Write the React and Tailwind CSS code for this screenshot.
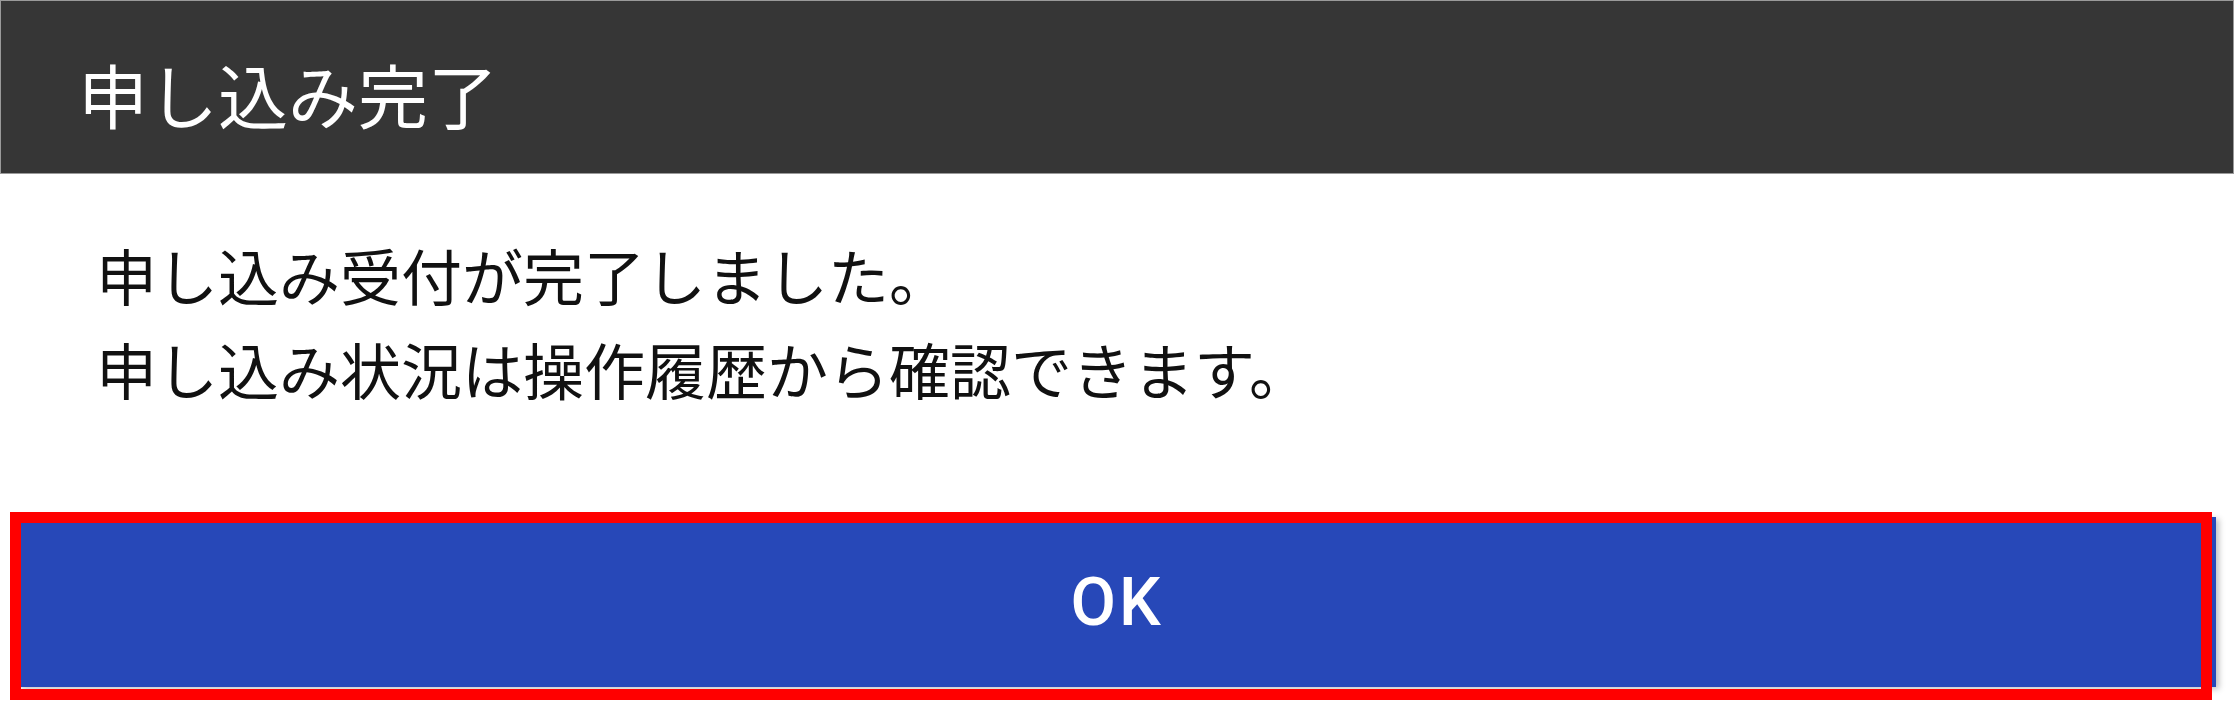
export default function App() {
  return (
    <div className="relative w-[2236px] h-[705px] bg-white overflow-hidden font-['Noto_Sans_CJK_JP','Noto_Sans',sans-serif]">
      {/* Dialog header */}
      <div className="w-[2234px] h-[174px] bg-[#363636] border border-[#9a9a9a] flex items-center pl-[77px] pt-[14px]">
        <h1 className="text-[70px] leading-none text-white font-normal">申し込み完了</h1>
      </div>

      {/* Message */}
      <div className="pl-[96px] pt-[54px] text-[61px] leading-[94px] text-[#111]">
        <p>申し込み受付が完了しました。</p>
        <p>申し込み状況は操作履歴から確認できます。</p>
      </div>

      {/* Action */}
      <div className="pl-[18px] pt-[101px]">
        <button className="w-[2198px] h-[170px] bg-[#2748b8] shadow-[3px_2px_6px_rgba(0,0,0,0.25)] flex items-center justify-center text-white text-[66px] font-medium font-['Roboto',sans-serif] tracking-[3px]">
          OK
        </button>
      </div>

      {/* Red highlight frame */}
      <div className="absolute left-[10px] top-[512px] w-[2202px] h-[188px] border-[11px] border-[#ff0000] pointer-events-none" />
    </div>
  );
}
